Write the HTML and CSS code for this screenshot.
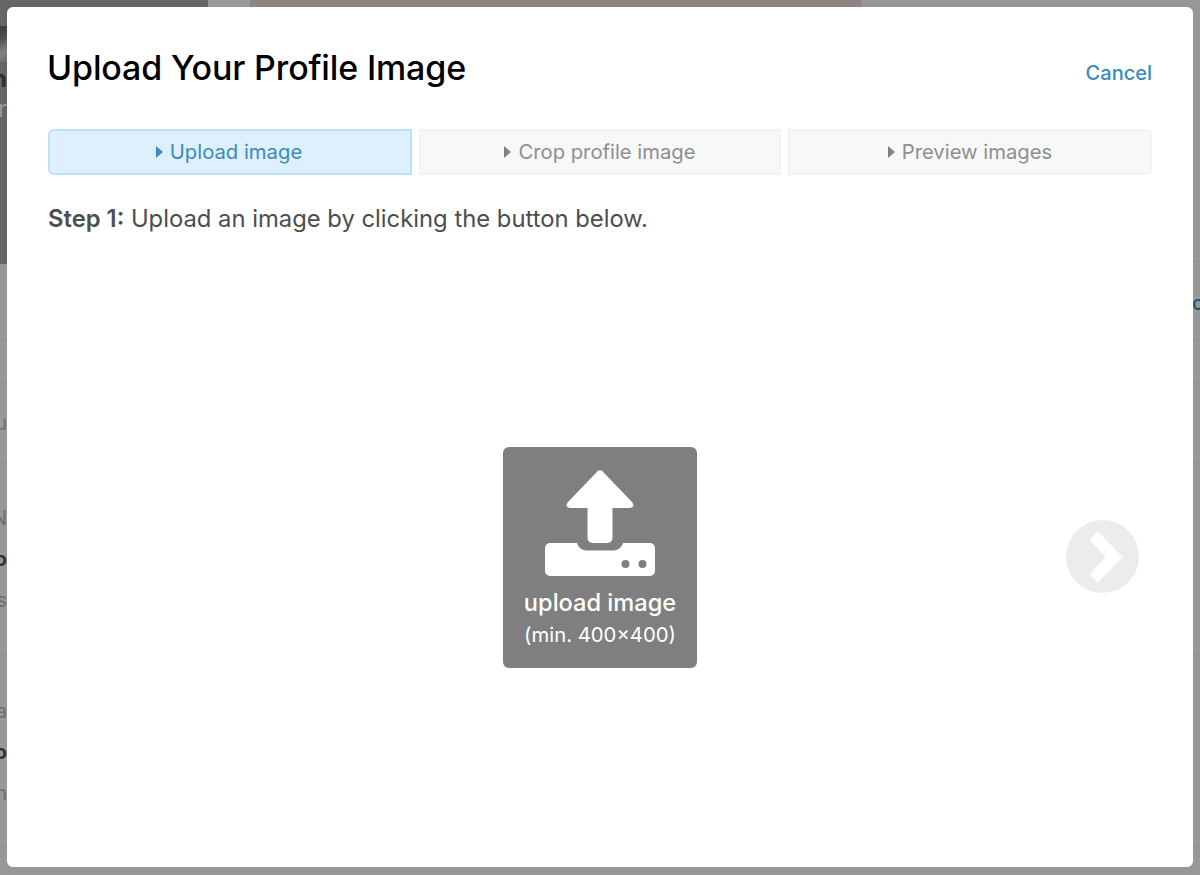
FILE: index.html
```html
<!DOCTYPE html>
<html lang="en">
<head>
<meta charset="utf-8">
<title>Upload Your Profile Image</title>
<link rel="stylesheet" href="styles.css">
</head>
<body>
<div class="page">
  <div class="hero">
    <div class="hero-a">
      <span class="hero-mark"></span>
      <span class="hero-h">h</span>
      <span class="hero-r">r</span>
    </div>
    <div class="hero-b"></div>
    <div class="hero-c"></div>
    <div class="hero-d"></div>
  </div>
  <div class="band band-1"><span class="peek-right">ca</span></div>
  <div class="band band-2"></div>
  <div class="band band-3"><span class="peek peek-u">u</span></div>
  <div class="band band-4">
    <span class="peek peek-n">N</span>
    <span class="peek peek-b">o</span>
    <span class="peek peek-s">s</span>
  </div>
  <div class="band band-5">
    <span class="peek peek-a">a</span>
    <span class="peek peek-b2">o</span>
    <span class="peek peek-m">n</span>
  </div>
</div>
<div class="modal">
  <header class="head">
    <h1 class="title">Upload Your Profile Image</h1>
    <a class="cancel">Cancel</a>
  </header>
  <div class="steps">
    <div class="step step-active"><span class="tri"></span>Upload image</div>
    <div class="step step-mid"><span class="tri"></span>Crop profile image</div>
    <div class="step step-last"><span class="tri"></span>Preview images</div>
  </div>
  <p class="hint"><strong>Step 1:</strong> Upload an image by clicking the button below.</p>
  <div class="stage">
    <button class="upload" type="button">
      <svg class="upload-icon" width="110" height="106" viewBox="0 0 110 106">
        <path fill="#fff" d="M52.800 1Q55-0.500 57.200 1L87 32Q90.500 37 85 38H67.500V68a5 5 0 0 1-5 5H47.500a5 5 0 0 1-5-5V38H25Q19.500 37 23 32Z"/>
        <path fill="#fff" fill-rule="evenodd" d="M5 73H32c1 4 5 7.500 10 7.500H68c5 0 9-3.500 10-7.500H105a5 5 0 0 1 5 5V101a5 5 0 0 1-5 5H5a5 5 0 0 1-5-5V78a5 5 0 0 1 5-5zM80.500 90a4 4 0 1 0 0 8 4 4 0 0 0 0-8zM97.500 90a4 4 0 1 0 0 8 4 4 0 0 0 0-8z"/>
      </svg>
      <span class="upload-label">upload image</span>
      <span class="upload-min">(min. 400×400)</span>
    </button>
    <span class="next">
      <svg width="35" height="52" viewBox="-1 -1 35 52"><path fill="#fff" d="M6 1Q7.700-0.700 9.400 1L32.700 25L9.400 49Q7.700 50.700 6 49L1 44Q-0.700 42.300 1 40.700L15.700 25L1 9.300Q-0.700 7.700 1 6Z"/></svg>
    </span>
  </div>
</div>
</body>
</html>
```
FILE: styles.css
```css
* { box-sizing: border-box; }
html, body { margin: 0; height: 100%; }
body {
  background: #989899;
  font-family: Inter, "Liberation Sans", sans-serif;
  overflow: hidden;
}
.page { height: 875px; display: flex; flex-direction: column; }
.hero { height: 264px; display: flex; flex: none; }
.hero-a {
  width: 208px;
  background: #656567;
  display: flex;
  flex-direction: column;
  overflow: hidden;
  color: #2f2f2f;
}
.hero-mark {
  display: block;
  width: 7px;
  height: 36px;
  margin-top: 26px;
  background: linear-gradient(160deg, #3c3c3c 0, #4c4c4c 30%, #808080 70%, #707070 100%);
}
.hero-h { width: 7px; overflow: hidden; margin-top: 2px; font-size: 24px; line-height: 30px; font-weight: 700; direction: rtl; }
.hero-r { width: 7px; overflow: hidden; font-size: 24px; line-height: 30px; color: #9a9a9a; direction: rtl; }
.hero-b { width: 42px; background: #9a9a9e; }
.hero-c { width: 611px; background: #8f8580; }
.hero-d { flex: 1; height: 262px; background: #979799; border-bottom: 1px solid #8b8b8c; }
.band {
  flex: none;
  border-bottom: 1px solid #8b8b8c;
  display: flex;
  flex-direction: column;
}
.band-1 { height: 76px; padding: 27px 0 0 1192px; }
.band-2 { height: 43px; }
.band-3 { height: 80px; padding-top: 26px; }
.band-4 { height: 192px; padding-top: 41px; }
.band-5 { height: 192px; padding-top: 42px; }
.peek-right {
  font-size: 20px;
  line-height: 24px;
  font-weight: 500;
  color: #24506e;
}
.peek {
  display: block;
  width: 7px;
  height: 28px;
  overflow: hidden;
  font-size: 20px;
  line-height: 28px;
  color: #6d6d6d;
  direction: rtl;
}
.peek-b, .peek-b2 { margin-top: 13px; font-weight: 700; color: #333; }
.peek-s, .peek-m { margin-top: 13px; }

.modal {
  position: fixed;
  left: 7px;
  top: 7px;
  width: 1186px;
  height: 860px;
  background: #fff;
  border-radius: 6px;
  padding: 0 41px;
  display: flex;
  flex-direction: column;
}
.head {
  height: 122px;
  flex: none;
  display: flex;
  justify-content: space-between;
  align-items: flex-start;
}
.title {
  margin: 39px 0 0 -1px;
  font-size: 34px;
  line-height: 44px;
  font-weight: 500;
  color: #000;
  letter-spacing: -0.15px;
}
.cancel {
  margin-top: 52.500px;
  font-size: 20px;
  line-height: 26px;
  font-weight: 500;
  color: #3a8bbb;
}
.steps {
  flex: none;
  display: grid;
  grid-template-columns: 364px 362px 364px;
  column-gap: 7px;
  height: 46px;
}
.step {
  display: flex;
  align-items: center;
  justify-content: center;
  padding-bottom: 1px;
  font-size: 20.250px;
  color: #8f8f8f;
  background: #f7f8f8;
  border: 2px solid #f1f2f2;
}
.step-active {
  padding-right: 2px;
  background: #def0fd;
  border-color: #b9e1fa;
  color: #3a8bbb;
  border-radius: 6px 0 0 6px;
}
.step-last { border-radius: 0 6px 6px 0; }
.tri {
  width: 0;
  height: 0;
  margin-right: 7px;
  border-style: solid;
  border-width: 6px 0 6px 7px;
  border-color: transparent transparent transparent #808080;
}
.step-active .tri { border-left-color: #3a8bbb; }
.hint {
  flex: none;
  margin: 29px 0 0;
  font-size: 23.800px;
  line-height: 30px;
  color: #4e4e4e;
}
.hint strong { font-weight: 600; }
.stage {
  flex: 1;
  position: relative;
  display: flex;
  justify-content: center;
  align-items: flex-start;
  padding-top: 213px;
}
.upload {
  width: 194px;
  height: 221px;
  padding: 23px 0 0;
  border: 0;
  border-radius: 6px;
  background: #7f7f7f;
  color: #fff;
  font-family: inherit;
  display: flex;
  flex-direction: column;
  align-items: center;
}
.upload-icon { flex: none; display: block; }
.upload-label { margin-top: 12px; font-size: 23.600px; line-height: 30px; font-weight: 500; }
.upload-min { margin-top: 3px; font-size: 20.300px; line-height: 28px; }
.next {
  position: absolute;
  left: 1018px;
  top: 286px;
  width: 73px;
  height: 73px;
  padding-left: 8px;
  border-radius: 50%;
  background: #ececec;
  display: flex;
  align-items: center;
  justify-content: center;
}
```
